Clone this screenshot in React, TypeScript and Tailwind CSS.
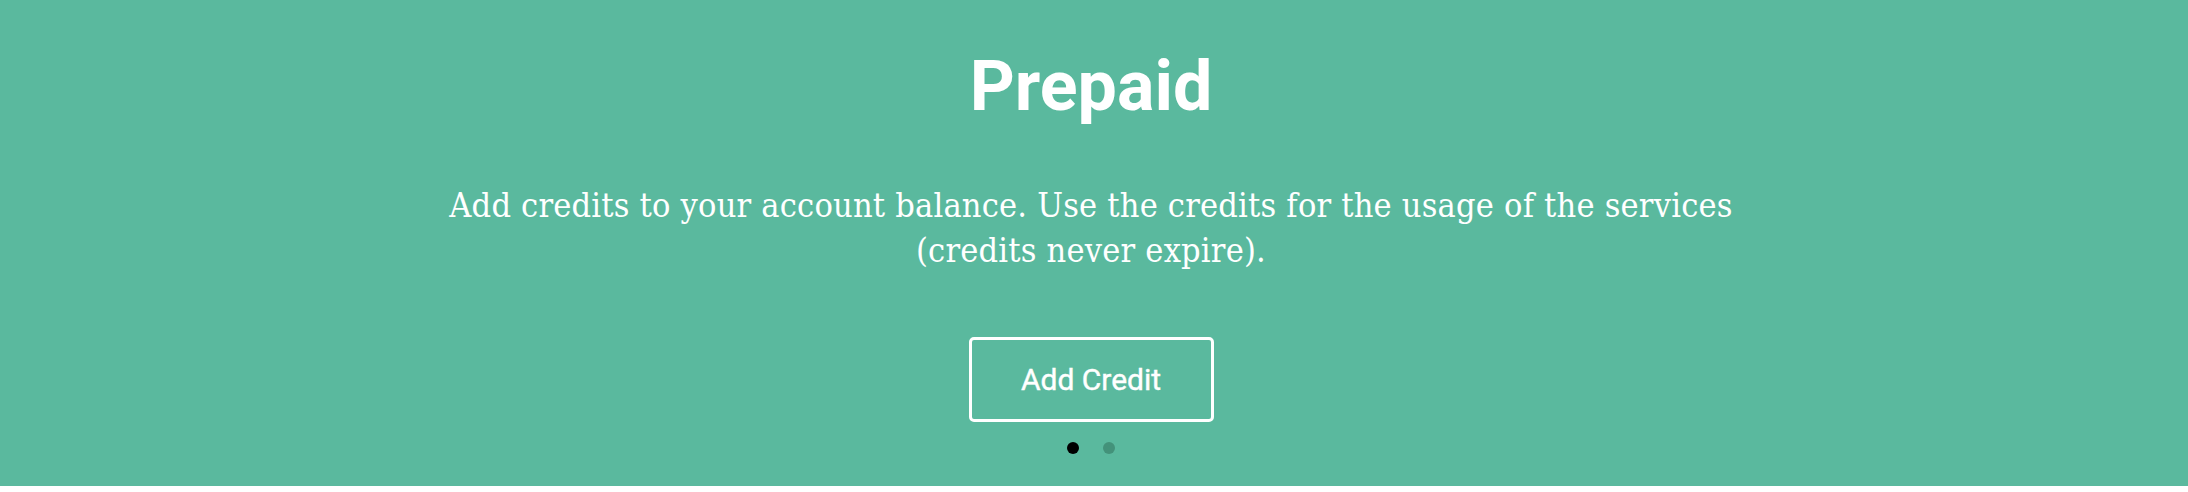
export default function App() {
  return (
    <div className="w-full bg-white">
      <section className="w-full bg-[#5ab99e] pt-[44px] pb-[32px] pr-[6px] flex flex-col items-center text-white">
        <h1 className="font-['Roboto',sans-serif] font-bold text-[70px] leading-[84px]">Prepaid</h1>
        <p className="mt-[55px] max-w-[1320px] text-center font-['DejaVu_Serif',serif] font-stretch-condensed tracking-[0.2px] text-[34px] leading-[45px]">
          Add credits to your account balance. Use the credits for the usage of the services (credits never
          expire).
        </p>
        <button className="mt-[64px] w-[245px] h-[85px] border-[3px] border-white rounded-[5px] font-['Roboto',sans-serif] font-normal text-[30px] leading-none [-webkit-text-stroke:0.4px_#fff]">
          Add Credit
        </button>
        <div className="mt-[20px] flex gap-[24px]">
          <span className="w-3 h-3 rounded-full bg-black" />
          <span className="w-3 h-3 rounded-full bg-[#43927a]" />
        </div>
      </section>
    </div>
  );
}
